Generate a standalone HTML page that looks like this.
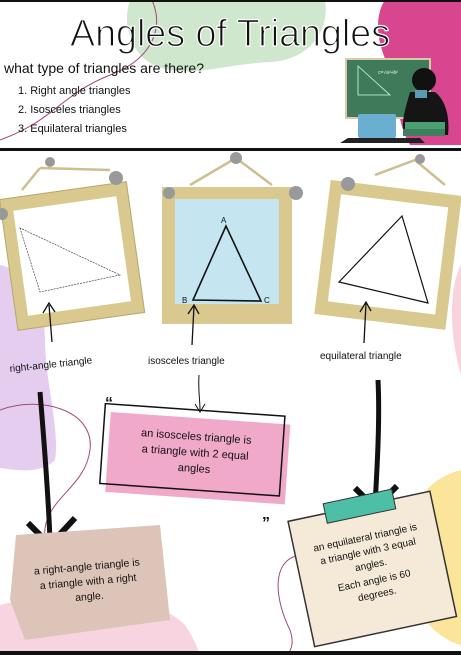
<!DOCTYPE html>
<html><head><meta charset="utf-8"><style>
html,body{margin:0;padding:0;background:#fff;}
svg{display:block}
text{font-family:"Liberation Sans","DejaVu Sans",sans-serif;fill:#111}
</style></head><body>
<svg width="461" height="655" viewBox="0 0 461 655" xmlns="http://www.w3.org/2000/svg">
<rect width="461" height="655" fill="#fff"/>
<path d="M130 0 H325 C330 30 310 60 270 62 C230 64 200 75 170 70 C135 65 120 30 130 0Z" fill="#cfe7cc"/>
<path d="M385 0 H461 V145 H410 C395 120 400 95 390 70 C375 40 375 15 385 0Z" fill="#d7468f"/>
<path d="M0 265 C25 270 45 300 45 340 C45 380 60 430 55 460 C40 475 15 470 0 468Z" fill="#e5cdef"/>
<path d="M461 265 C450 285 448 330 461 375Z" fill="#f8d3dc"/>
<path d="M0 605 C60 590 150 590 185 625 C195 640 198 650 200 655 H0Z" fill="#f8d3e0"/>
<path d="M461 470 C420 480 400 520 405 570 C410 615 440 640 461 645Z" fill="#fbe59a"/>
<path d="M152 0 C165 30 150 60 110 75 C60 95 55 120 0 140" stroke="#a04a7a" fill="none" stroke-width="1"/>
<path d="M0 410 C40 395 95 410 90 450 C85 490 40 500 45 540" stroke="#a04a7a" fill="none" stroke-width="1"/>
<path d="M300 555 C270 560 275 600 290 630 C295 645 290 650 288 655" stroke="#a04a7a" fill="none" stroke-width="1"/>
<rect x="0" y="0" width="461" height="2" fill="#111"/>
<rect x="0" y="148" width="461" height="3" fill="#111"/>
<rect x="0" y="651" width="461" height="4" fill="#111"/>
<text x="70" y="46" font-size="38" textLength="320" lengthAdjust="spacingAndGlyphs" style="stroke:#fff;stroke-width:1.2;paint-order:normal">Angles of Triangles</text>
<text x="4" y="73" font-size="14">what type of triangles are there?</text>
<text x="18" y="94" font-size="11">1. Right angle triangles</text>
<text x="18" y="113" font-size="11">2. Isosceles triangles</text>
<text x="18" y="132" font-size="11">3. Equilateral triangles</text>
<rect x="346" y="59" width="84" height="59" fill="#3f7a5a" stroke="#d9c9a8" stroke-width="2"/>
<path d="M358 66 L358 95 L390 95Z" stroke="#cfe" fill="none" stroke-width="0.8"/>
<text x="378" y="74" font-size="5" style="fill:#eee">c=√a²+b²</text>
<circle cx="424" cy="80" r="12" fill="#111"/>
<path d="M410 92 C405 110 400 125 405 135 H448 C450 115 445 100 435 92Z" fill="#151515"/>
<rect x="415" y="90" width="12" height="8" fill="#5a9ab5"/>
<rect x="358" y="114" width="38" height="24" fill="#6aaed0" rx="2"/>
<path d="M348 138 H420 L425 143 H340Z" fill="#222"/>
<rect x="405" y="122" width="40" height="7" fill="#4c9f70"/>
<rect x="403" y="129" width="42" height="7" fill="#3e7f5c"/>
<g>
 <path d="M22 190 L40 168 M110 170 L40 168" stroke="#cdbf8f" stroke-width="2.5"/>
 <g transform="rotate(-8 72 255)">
  <rect x="8" y="190" width="128" height="132" fill="#d9c98e"/>
  <rect x="8" y="190" width="128" height="132" fill="none" stroke="#b8a66c"/>
  <rect x="20" y="203" width="104" height="106" fill="#fff"/>
 </g>
 <path d="M20 228 L40 292 L120 275Z" stroke="#444" fill="none" stroke-width="0.7" stroke-dasharray="2 1"/>
 <circle cx="50" cy="162" r="5" fill="#999"/><circle cx="116" cy="178" r="7" fill="#999"/><circle cx="2" cy="214" r="6" fill="#999"/>
</g>
<g>
 <path d="M190 185 L236 158 L272 185" stroke="#cdbf8f" stroke-width="2.5" fill="none"/>
 <rect x="162" y="187" width="130" height="137" fill="#d9c98e"/>
 <rect x="175" y="199" width="104" height="105" fill="#c5e6f0"/>
 <path d="M226 226 L193 300 L261 301Z" stroke="#111" fill="none" stroke-width="1.6"/>
 <text x="221" y="223" font-size="8">A</text><text x="182" y="303" font-size="8">B</text><text x="264" y="303" font-size="8">C</text>
 <circle cx="236" cy="158" r="6" fill="#999"/><circle cx="169" cy="193" r="6" fill="#999"/><circle cx="296" cy="193" r="7" fill="#999"/>
</g>
<g>
 <path d="M375 175 L415 160 L445 185" stroke="#cdbf8f" stroke-width="2.5" fill="none"/>
 <g transform="rotate(7 385 255)">
  <rect x="322" y="187" width="132" height="135" fill="#d9c98e"/>
  <rect x="334" y="200" width="108" height="108" fill="#fff"/>
 </g>
 <path d="M402 216 L339 282 L428 303Z" stroke="#111" fill="none" stroke-width="1.2"/>
 <circle cx="420" cy="159" r="5" fill="#999"/><circle cx="348" cy="184" r="7" fill="#999"/>
</g>
<path d="M52 342 L49 305 M43 313 L49 303 L55 312" stroke="#111" fill="none" stroke-width="1.3"/>
<path d="M192 345 L194 306 M188 314 L194 305 L199 314" stroke="#111" fill="none" stroke-width="1.3"/>
<path d="M364 343 L366 303 M360 312 L366 302 L371 311" stroke="#111" fill="none" stroke-width="1.3"/>
<path d="M199 375 C198 390 200 400 200 410 M195 404 L200 412 L205 404" stroke="#111" fill="none" stroke-width="1"/>
<text x="10" y="372" font-size="10" transform="rotate(-6 10 372)">right-angle triangle</text>
<text x="148" y="364" font-size="10">isosceles triangle</text>
<text x="320" y="359" font-size="10">equilateral triangle</text>
<path d="M40 392 C44 440 48 490 50 540" stroke="#111" fill="none" stroke-width="5"/>
<path d="M28 523 L50 545 L75 518" stroke="#111" fill="none" stroke-width="6"/>
<path d="M378 380 C380 420 377 470 375 505" stroke="#111" fill="none" stroke-width="5"/>
<path d="M355 488 L375 508 L397 486" stroke="#111" fill="none" stroke-width="6"/>
<g transform="rotate(4 195 455)">
 <rect x="108" y="418" width="180" height="80" fill="#f0a9c8"/>
 <rect x="102" y="410" width="180" height="80" fill="none" stroke="#111" stroke-width="1.5"/>
</g>
<text x="105" y="408" font-size="16" font-weight="bold">“</text>
<text x="262" y="528" font-size="16" font-weight="bold">”</text>
<text x="195" y="440" font-size="11" text-anchor="middle" transform="rotate(4 195 455)">an isosceles triangle is</text>
<text x="195" y="456" font-size="11" text-anchor="middle" transform="rotate(4 195 455)">a triangle with 2 equal</text>
<text x="195" y="472" font-size="11" text-anchor="middle" transform="rotate(4 195 455)">angles</text>
<path d="M16 535 L160 525 L170 620 L25 640 L10 600Z" fill="#dcc5b8"/>
<text x="88" y="570" font-size="10.5" text-anchor="middle" transform="rotate(-5 88 580)">a right-angle triangle is</text>
<text x="88" y="585" font-size="10.5" text-anchor="middle" transform="rotate(-5 88 580)">a triangle with a right</text>
<text x="88" y="600" font-size="10.5" text-anchor="middle" transform="rotate(-5 88 580)">angle.</text>
<g transform="rotate(-12 372 570)">
 <rect x="300" y="505" width="145" height="128" fill="#f5ead8" stroke="#333" stroke-width="1.5"/>
 <rect x="338" y="495" width="70" height="20" fill="#4cbfa6" stroke="#333" stroke-width="1"/>
 <text x="372" y="540" font-size="10" text-anchor="middle">an equilateral triangle is</text>
 <text x="372" y="554" font-size="10" text-anchor="middle">a triangle with 3 equal</text>
 <text x="372" y="568" font-size="10" text-anchor="middle">angles.</text>
 <text x="372" y="584" font-size="10" text-anchor="middle">Each angle is 60</text>
 <text x="372" y="598" font-size="10" text-anchor="middle">degrees.</text>
</g>
</svg>
</body></html>
